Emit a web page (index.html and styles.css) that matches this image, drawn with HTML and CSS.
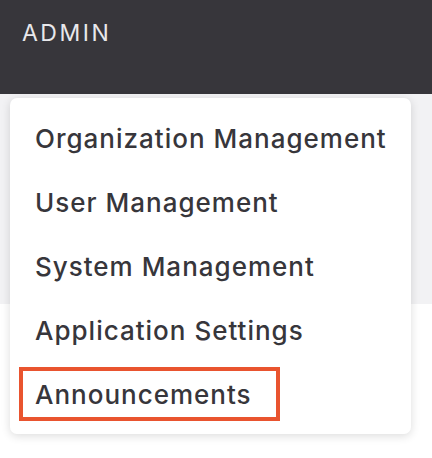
FILE: index.html
```html
<!DOCTYPE html>
<html lang="en">
<head>
<meta charset="utf-8">
<title>Admin</title>
<link rel="stylesheet" href="styles.css">
</head>
<body>
<header class="topbar">
  <span class="topbar-title">ADMIN</span>
</header>
<main class="page">
  <nav class="menu">
    <a class="menu-item" href="#">Organization Management</a>
    <a class="menu-item" href="#">User Management</a>
    <a class="menu-item" href="#">System Management</a>
    <a class="menu-item" href="#">Application Settings</a>
    <a class="menu-item menu-item--highlight" href="#"><span class="highlight-box">Announcements</span></a>
  </nav>
</main>
</body>
</html>
```
FILE: styles.css
```css
html, body {
  margin: 0;
  padding: 0;
  background: #ffffff;
  font-family: "Inter", "Open Sans", sans-serif;
  font-variant-ligatures: none;
}
body {
  min-height: 458px;
}
.topbar {
  height: 94px;
  background: #37363b;
  display: flex;
  align-items: flex-start;
  padding: 19px 0 0 22px;
  box-sizing: border-box;
}
.topbar-title {
  color: #e8e8eb;
  font-size: 23px;
  letter-spacing: 2.5px;
  line-height: 28px;
}
.page {
  padding: 4px 0 24px 10px;
  min-height: 364px;
  box-sizing: border-box;
  background: linear-gradient(to bottom, #f2f2f4 0, #f2f2f4 210px, #ffffff 210px);
}
.menu {
  width: 401px;
  height: 336px;
  box-sizing: border-box;
  padding: 9px 0 8px;
  background: #ffffff;
  border-radius: 7px;
  box-shadow: 0 2px 10px rgba(0, 0, 0, 0.14);
  display: flex;
  flex-direction: column;
}
.menu-item {
  height: 64px;
  display: flex;
  align-items: center;
  padding-left: 25px;
  color: #37363b;
  text-decoration: none;
  font-size: 26px;
  font-weight: 500;
  letter-spacing: 1px;
}
.menu-item--highlight {
  padding-left: 9px;
}
.highlight-box {
  display: flex;
  align-items: center;
  height: 54px;
  box-sizing: border-box;
  border: 4px solid #e9542f;
  padding: 0 24px 0 12px;
}
```
